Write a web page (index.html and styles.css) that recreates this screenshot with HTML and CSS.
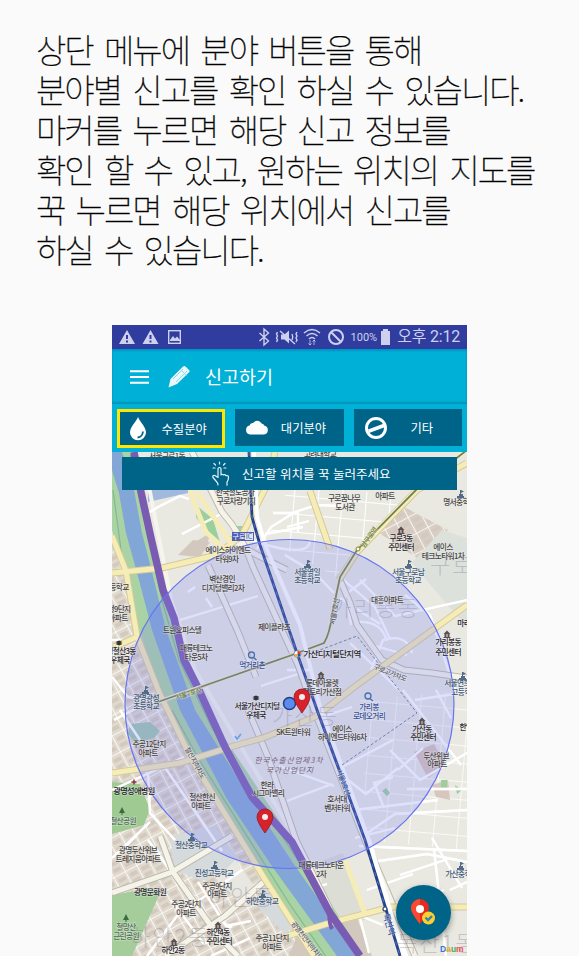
FILE: index.html
```html
<!DOCTYPE html>
<html lang="ko">
<head>
<meta charset="utf-8">
<title>신고하기</title>
<link rel="stylesheet" href="styles.css">
</head>
<body>
<main class="page">
<div class="intro">
<p>상단 메뉴에 분야 버튼을 통해</p>
<p>분야별 신고를 확인 하실 수 있습니다.</p>
<p>마커를 누르면 해당 신고 정보를</p>
<p>확인 할 수 있고, 원하는 위치의 지도를</p>
<p>꾹 누르면 해당 위치에서 신고를</p>
<p>하실 수 있습니다.</p>
</div>
<section class="phone">
<div class="status">
<svg class="status-icons" viewBox="0 0 355 24">
<g fill="#cdd1ee">
<path fill-rule="evenodd" d="M15 5L23 19H7ZM14 10v4h2v-4ZM14 15.500v2h2v-2Z"/>
<path fill-rule="evenodd" d="M38.500 5L46.500 19H30.500ZM37.500 10v4h2v-4ZM37.500 15.500v2h2v-2Z"/>
<path d="M58 15l3-4 2 2.500 2-2 3 3.500v1H58z"/>
<path d="M169 9.500h3.500l4.500-4v13l-4.500-4H169z"/>
<path d="M269 6h2V4h5v2h2v14h-9z"/>
</g>
<g fill="none" stroke="#cdd1ee" stroke-width="1.400">
<rect x="56.700" y="5.700" width="11.600" height="12.600"/>
<path d="M147.500 8l9 8-4.500 4V4l4.500 4-9 8"/>
<path d="M165.500 7l-1 2 1 2-1 2 1 2-1 2M168 6l15 13M180 9q1.500 3 0 6M185 7l-1 2 1 2-1 2 1 2-1 2"/>
<path d="M192 8q8-7 16 0M194.500 11q5.500-5 11 0M197 14q3-3 6 0"/>
<path d="M198 15v5m-1.500-1.500L198 20l1.500-1.500M202 20v-5m-1.500 1.500L202 15l1.500 1.500" stroke-width=".8"/>
<circle cx="224" cy="12" r="7" stroke-width="2"/><path d="M219 7l10 10" stroke-width="2"/>
</g>
</svg>
<span class="battery">100%</span><span class="clock">오후 2:12</span>
</div>
<header class="bar">
<svg class="burger" viewBox="0 0 20 14"><path d="M0 1.300h19M0 7h19M0 12.700h19" stroke="#fff" stroke-width="2"/></svg>
<svg class="pencil" viewBox="0 0 22 22"><path d="M15 0.500q1.500-1 3 .5l3 3q1 1 .3 2L9 18 .5 21.500 2.500 13z" fill="#e9f8fc"/><path d="M5 13l10-10M8 16L19 5M12.500 3.500l6 6" stroke="#8bd9ea" stroke-width="1"/></svg>
<h1>신고하기</h1>
</header>
<nav class="tabs">
<button class="tab active"><svg viewBox="0 0 24 24"><path d="M12 0C10 5 4 10 4 15.500a8 7.700 0 0 0 16 0C20 10 14 5 12 0z" fill="#fff"/><path d="M11.500 20.500q5-.5 5.500-6" fill="none" stroke="#006489" stroke-width="1.800"/></svg><span>수질분야</span></button>
<button class="tab"><svg viewBox="0 0 24 24"><path d="M5 18.500a4.600 4.600 0 0 1-.5-9q1-3 3.500-2.500 5-5 9 .8 1.500.2 2.500 1.900a4.500 4.500 0 0 1-.5 8.800z" fill="#fff"/></svg><span>대기분야</span></button>
<button class="tab"><svg viewBox="0 0 24 24"><circle cx="12" cy="12" r="9.500" fill="none" stroke="#fff" stroke-width="3"/><path d="M4 13.500L20 7.500v4L5 17z" fill="#fff"/></svg><span>기타</span></button>
</nav>
<div class="map">
<svg class="canvas" viewBox="112 452 355 504">
<defs>
<pattern id="blocks" width="13" height="18" patternUnits="userSpaceOnUse" patternTransform="rotate(-28)"><path d="M0 0h13M0 0v18" stroke="#fff" stroke-width="1.600" fill="none"/><path d="M3 4h8v4H3zM3 11h8v4H3z" fill="#d4c9be"/></pattern>
<pattern id="grid" width="24" height="18" patternUnits="userSpaceOnUse" patternTransform="rotate(5)"><path d="M0 0h24M0 0v18" stroke="#fff" stroke-width="2" fill="none"/></pattern>
<g id="school" fill="#526b86"><path d="M-3 2h7v2h-7zM-1 0h4v2h-4zM0-4h1v5H0zM1-4l3 1.500L1-1z"/></g>
<g id="office" fill="#5a5050"><path d="M-3.500 0L0-3.500 3.500 0zM-2.500 0h1.500v3h-1.500zM1 0h1.500v3H1zM-.5 0h1v3h-1zM-3.500 3h7v1h-7z"/></g>
<g id="post" fill="#333"><path d="M-3.500-1L0-2.500 3.500-1 1.500 0 3.500 1 0 2.500-3.500 1-1.500 0z"/></g>
<g id="tree" fill="#3e6b45"><path d="M0-4l3 6h-6zM-.5 1h1v3h-1z"/></g>
<g id="pin"><path d="M0 12Q-8 1-8-4a8 8 0 0 1 16 0Q8 1 0 12z" fill="#d8222b" stroke="#8e1d25" stroke-width=".8"/><circle cy="-4" r="3" fill="#eee"/></g>
</defs>
<rect x="112" y="452" width="355" height="504" fill="#e9e9e2"/>
<!-- city blocks -->
<path d="M112 540L127 590 160 695 193 765 236 836 314 956H112z" fill="#e0d9ce"/>
<path d="M112 540L127 590 160 695 193 765 236 836 314 956H112z" fill="url(#blocks)"/>
<path d="M400 505L448 530 420 560 375 530z" fill="#d9cec3"/>
<path d="M400 505L448 530 420 560 375 530z" fill="url(#blocks)"/>
<path d="M287 490h70l50 10-50 50-15 30-75-40z" fill="url(#grid)"/>
<path d="M360 700L467 690V850l-100-10z" fill="url(#grid)" opacity=".75"/>
<path d="M442 530l25 8v90l-55-65z" fill="#dce1dc"/>
<path d="M170 836l45-10 25 35-38 20-28-12z" fill="#d5dadd"/>
<path d="M235 860l22 30-15 15-25-26z" fill="#e8e7e2"/>
<path d="M264 884l28 38-5 14-30-30z" fill="#d5dadd"/>
<path d="M318 862l25-9 24 66-35 12z" fill="#dcded5"/>
<path d="M178 555l15-15 17 2-10 15zM190 545l20-12-4 18zM333 925l22-12 17 43h-17zM297 935l14-3 18 24h-40z" fill="#d3c8be"/>
<path d="M414 752l20-8 12 22-18 12zM432 785l16-5 2 20-14-3z" fill="#d8c5bc"/>
<!-- parks -->
<path d="M112 782l28 2 10 25-6 16-32 9z" fill="#9fcb93"/>
<path d="M112 895l40-7 8 5-28 63h-20z" fill="#a5cd9b"/>
<path d="M130 724l20-2 10 9-6 7-18 5-8-9z" fill="#9fc9ae"/>
<path d="M196 505l17 14 9 30-14-14-12-18zM230 526h18l-4 9zM382 791l4-3 4 5-3 3zM441 780h6v8h-6zM455 785l7 5-5 4z" fill="#9bcf9d"/>
<path d="M148 480l40 5v8l-40 9z" fill="#a1b9dc"/>
<!-- river -->
<path d="M112 452h22l27 130 24 83 23 48 86 130 69 113h-47L236 836 193 765 160 695 127 590 112 530z" fill="#a9d3a4"/>
<path d="M113 490l12 90 19 70 25 63M130 455l17 75 15 70 17 60 33 68 85 131 65 109M172 710l26 48 91 145 42 61" fill="none" stroke="#83b98d" stroke-width="1.200"/>
<path d="M112 452h10l12 38 8 43 12 47 12 50 29 80 55 88 45 68 64 90h-22l-63-87-47-70-47-89-28-80-13-50-13-47-7-40-7-23z" fill="#82a6d5"/>
<path d="M143 456l28 144 24 70 94 157" fill="none" stroke="#f5f5ed" stroke-width="4"/>
<!-- minor streets -->
<g fill="none" stroke="#b9b9b4" stroke-width="3.400" opacity=".65"><use href="#streets"/></g>
<g id="streets" fill="none" stroke="#fff" stroke-width="2.300">
<path d="M150 512l8-5 22-11 9 3M182 534l43-22M180 620l78-24M188 592l7-5M212 607l-6-9M257 549l14-22 24-15 22-7 22 1M273 513h25v20M287 527l22-6M265 534l38-7M250 540q60 20 60 0"/>
<path d="M285 555l30 18 19 20M340 577l35 30 15 32M351 625l-5-31 20-15M340 598l40 26M387 641q-6-20-28-19M412 653q-5-20-29-13l-12 30M372 645l35 10M360 580l35 36 72-16M350 643l50 48M405 595l25 20 25 75"/>
<path d="M287 670h25M261 686l37-12M267 735l85-28M279 766l55 20M287 801l45-17M344 766l49-26M348 780l18 14 32-26M346 811l92-11M384 808l-10-25 19-6M360 838l35-24 72-4M407 789h60M398 770l25-22M403 690l58 75M415 700l52-8M436 690l15 28M390 750l30 30 47-27"/>
<path d="M355 838l40-10M372 862l55-8 40 8M367 890l46-16M359 846l108 5M432 838l30 50M391 905l53-15M407 956l-15-40M434 850l12 106M400 875l48-16M450 890l17-8M383 925l-25-10M369 953l-9-35M290 935l21-5M317 887l10-3"/>
<path d="M112 640h23M112 677l16 20 25 5M114 720l25-13M120 710l20 30M112 790l72-33M148 773l2 40 25 27M150 822l-38 36M122 850l15-15M148 840l33 45M164 766l58 85M174 870l22 30M171 900l33 44 28-18M198 882l28 44 25-5M211 956l39-18M147 956l30-40 65-46"/>
</g>
<!-- arterials -->
<g fill="none" stroke="#bbb9b0" stroke-width="7">
<path d="M192 452l30 60q20 22 31 55l45 98 15 42 52 133 50 116M208 565l30 67 18 45M248 710l20 47 28 83 34 69M340 580l10 23 7 22 25 35 22 10 28 3 35 5M287 570l-30-15-28-16"/>
<path d="M160 836l13 36 45 64 20 20M112 893l60-21 60-36M165 956l60-40 42-37"/>
</g>
<g fill="none" stroke="#f6f4e9" stroke-width="5">
<path d="M192 452l30 60q20 22 31 55l45 98 15 42 52 133 50 116M208 565l30 67 18 45M248 710l20 47 28 83 34 69M340 580l10 23 7 22 25 35 22 10 28 3 35 5M287 570l-30-15-28-16"/>
<path d="M160 836l13 36 45 64 20 20M112 893l60-21 60-36M165 956l60-40 42-37"/>
</g>
<g fill="none" stroke="#d5ca9a" stroke-width="7">
<path d="M112 536l14 35 11 65 22 56 33 68 74 121 48 75M112 573l50-5 55-13 25-20 25-50 8-33M114 647l25-11M112 773l68-10 57-18 26-7M310 491l20 58M467 605l-110 80-42 32-52 21M287 936l46-14 58-15h76M467 463l-50 27-60 62-18 28"/>
</g>
<g fill="none" stroke="#f6ecb6" stroke-width="5">
<path d="M112 536l14 35 11 65 22 56 33 68 74 121 48 75M112 573l50-5 55-13 25-20 25-50 8-33M114 647l25-11M112 773l68-10 57-18 26-7M310 491l20 58M467 605l-110 80-42 32-52 21M287 936l46-14 58-15h76M467 463l-50 27-60 62-18 28M345 860l20 54"/>
<path d="M190 490q10 28 16 42l22 20M197 492l25 38 10 15"/>
</g>
<path d="M134 452l7 40 10 46 12 52 11 28 10 42 15 30 26 57 27 50 40 45 38 71 30 43" fill="none" stroke="#7a5bb2" stroke-width="7.500" stroke-linejoin="round"/>
<path d="M330 909q-2 12 2 20" fill="none" stroke="#7a5bb2" stroke-width="4"/>
<!-- rail lines -->
<path d="M155 703l137-48 32-12q6-10 8-28l8-38 17-27 60-61 50-39" fill="none" stroke="#f0edcf" stroke-width="4"/>
<path d="M155 703l137-48 32-12q6-10 8-28l8-38 17-27 60-61 50-39" fill="none" stroke="#768344" stroke-width="1.800"/>
<path d="M254 452l3 65 9 30 34 78 20 82 50 136 34 113" fill="none" stroke="#fff" stroke-width="4"/>
<path d="M249 452l3 65 8 28 37 108 20 57 48 130 35 116" fill="none" stroke="#24418e" stroke-width="2.800"/>
<path d="M249 452l3 65 8 28 37 108 20 57 48 130 35 116" fill="none" stroke="#8093c2" stroke-width=".6" stroke-dasharray="4 5"/>
<path d="M342 765l75-52-35-45-25-32-45 17" fill="none" stroke="#62778d" stroke-width=".9" stroke-dasharray="3 2"/>
<circle cx="385" cy="909" r="2" fill="#fff" stroke="#24418e" stroke-width="1.200"/><circle cx="358" cy="549" r="2" fill="#fff" stroke="#768344"/>
<!-- district names -->
<g class="district"><text x="331" y="616">가리봉동</text><text x="272" y="724">가산동</text><text x="208" y="905">하안동</text><text x="130" y="945">하안2동</text><text x="397" y="951">독산1동</text><text x="430" y="573">구로</text></g>
<!-- search radius -->
<circle cx="289.500" cy="704" r="164.500" fill="#7d84f5" fill-opacity=".25" stroke="#6673f2" stroke-width="1.200"/>
<g class="label">
<text x="167" y="459">서울구로1동</text><text x="320" y="457">고려대학교</text><text x="235" y="495">한국철도공사</text><text x="236" y="504">구로차량기지</text>
<text x="228" y="553">에이스하이엔드</text><text x="227" y="562">타워9차</text><text x="222" y="582">벽산경인</text><text x="223" y="591">디지털밸리2차</text>
<text x="344" y="501">구로꿈나무</text><text x="345" y="510">도서관</text><text x="385" y="499">아파트</text><text x="456" y="505">명서중학</text>
<text x="443" y="550">에이스</text><text x="443" y="559">테크노타워1차</text>
<text x="182" y="633">트윈오피스텔</text><text x="196" y="651">대륭테크노</text><text x="196" y="660">타운5차</text><text x="274" y="630">제이플라츠</text><text x="387" y="603">대흥아파트</text>
<text x="119" y="612">철9단지</text><text x="118" y="621">아파트</text><text x="119" y="590">등학교</text>
<text x="322" y="686">롯데아울렛</text><text x="322" y="695">팩토리가산점</text><text x="293" y="735">SK트윈타워</text><text x="342" y="732">에이스</text><text x="342" y="740">하이엔드타워6차</text>
<text x="436" y="759">두산위브</text><text x="437" y="767">아파트</text><text x="337" y="802">호서대</text><text x="337" y="811">벤처타워</text><text x="267" y="788">한라</text><text x="268" y="796">시그마밸리</text>
<text x="149" y="747">주공12단지</text><text x="148" y="756">아파트</text><text x="202" y="800">철산한신</text><text x="201" y="809">아파트</text><text x="138" y="853">광명두산위브</text><text x="138" y="862">트레지움아파트</text><text x="217" y="889">주공9단지</text><text x="217" y="897">아파트</text><text x="186" y="907">주공2단지</text><text x="186" y="916">아파트</text><text x="272" y="941">주공11단지</text><text x="272" y="950">아파트</text><text x="321" y="868">대륭테크노타운</text><text x="321" y="877">2차</text>
</g>
<g class="label strong">
<text x="401" y="541">구로3동</text><text x="401" y="550">주민센터</text><text x="332" y="657" class="station">가산디지털단지역</text><text x="448" y="645">가리봉동</text><text x="448" y="655">주민센터</text><text x="467" y="626">마리오</text>
<text x="257" y="709">서울가산디지털</text><text x="256" y="718">우체국</text><text x="121" y="654">명철산3동</text><text x="120" y="663">우체국</text><text x="422" y="732">가산동</text><text x="423" y="740">주민센터</text><text x="466" y="730">한양</text>
<text x="134" y="794" class="wide">광명성애병원</text><text x="150" y="895">광명문화원</text><text x="218" y="935">하안4동</text><text x="219" y="944">주민센터</text><text x="173" y="953">하안2동</text>
</g>
<g class="label blue"><text x="307" y="575">서울영일</text><text x="307" y="583">초등학교</text><text x="408" y="575">서울구로남</text><text x="408" y="583">초등학교</text><text x="146" y="701">광명광성</text><text x="146" y="709">초등학교</text><text x="457" y="686">서울연희</text><text x="461" y="695">고등학</text><text x="191" y="848">철산중학교</text><text x="214" y="876">진성고등학교</text><text x="262" y="904">하안중학교</text><text x="458" y="877">가산중학</text><text x="252" y="668" class="place">먹거리촌</text><text x="369" y="710" class="place">가리봉</text><text x="369" y="719" class="place">로데오거리</text></g>
<g class="label green"><text x="123" y="824">철산공원</text><text x="126" y="930">철망산</text><text x="126" y="939">근린공원</text></g>
<g class="label industry"><text x="289" y="763">한국수출산업제3차</text><text x="290" y="773">국가산업단지</text></g>
<g class="label route"><text transform="translate(189 696) rotate(-17)" fill="#707d3e">서울7호선</text><text transform="translate(337 612) rotate(-80)">서울7호선</text><text transform="translate(371 539) rotate(-55)" fill="#70812e">남구로역</text><text transform="translate(193 764) rotate(61)">철산지하차도</text><text transform="translate(389 675) rotate(22)">구로고가차도</text><text transform="translate(341 783) rotate(70)" fill="#34549e">서울1호선</text><text transform="translate(386 925) rotate(74)" fill="#34549e" class="stop">독산역</text><text transform="translate(305 942) rotate(52)">광명천안지하차도</text></g>
<use href="#school" x="307" y="564"/><use href="#school" x="408" y="564"/><use href="#school" x="145" y="690"/><use href="#school" x="460" y="494"/><use href="#school" x="462" y="676"/><use href="#school" x="191" y="837"/><use href="#school" x="214" y="865"/><use href="#school" x="262" y="894"/><use href="#school" x="460" y="866"/>
<use href="#office" x="401" y="530"/><use href="#office" x="447" y="634"/><use href="#office" x="321" y="675"/><use href="#office" x="422" y="721"/><use href="#office" x="218" y="925"/><use href="#office" x="174" y="942"/>
<use href="#post" x="256" y="698"/><use href="#post" x="119" y="643"/><use href="#tree" x="122" y="811"/><use href="#tree" x="126" y="918"/>
<path d="M131.500 782h5M134 779.500v5" stroke="#8d3344" stroke-width="1.500"/>
<g fill="none" stroke="#466fac" stroke-width="1.300"><circle cx="251.500" cy="655" r="3"/><path d="M253.500 657.500l3 2.500"/><circle cx="368" cy="696" r="3"/><path d="M370 698.500l3 2.500"/></g>
<path d="M235 736l2 3 4-5" fill="none" stroke="#6ba3e8" stroke-width="1.800"/>
<rect x="232" y="532" width="22" height="9" fill="#505fae"/><rect x="245" y="533" width="8" height="7" fill="#dfe5f2"/><text class="ic" x="239" y="539">구로</text><text class="ic inv" x="249" y="539">IC</text>
<circle cx="297.500" cy="654" r="3.500" fill="#fff" stroke="#345" stroke-width=".5"/><path d="M297.500 654v-3a3 3 0 0 1 3 3z" fill="#e73032"/><path d="M297.500 654h3a3 3 0 0 1-3 3z" fill="#2553bd"/><path d="M297.500 654v3a3 3 0 0 1-3-3z" fill="#eab422"/>
<circle cx="289.500" cy="703.500" r="6" fill="#5a8cee" stroke="#233d82" stroke-width="1.500"/>
<use href="#pin" x="302" y="701"/><use href="#pin" x="265" y="821"/>
<text class="daum" x="440" y="952"><tspan fill="#3978d5">D</tspan><tspan fill="#e9a62b">a</tspan><tspan fill="#4ba956">u</tspan><tspan fill="#ee4e5e">m</tspan></text>
</svg>
<div class="hint"><svg viewBox="0 0 20 26"><g fill="none" stroke="#e4f3f7" stroke-width="1.200" stroke-linecap="round" stroke-linejoin="round"><path d="M7 24q0-2-2-4l-3-3.500q-1-2.500 2-2l3 2V7.500q1.500-2 3 0V14q1-1.500 2.500 0 1.500-1 2.500.7 2.500-.7 2.500 1.500 0 3-1.500 5v3"/><path d="M8.500 1v2M3 2.500L4.500 4M14 2.500L12.500 4M2 7h2M13 7h2"/></g></svg><span>신고할 위치를 꾹 눌러주세요</span></div>
<button class="fab" aria-label="신고"><svg viewBox="0 0 55 55"><path d="M24 39Q15 28 15 23a9 9 0 0 1 18 0q0 5-9 16z" fill="#e42b1d"/><path d="M24 39Q15 28 15 23a9 9 0 0 1 9-9z" fill="#fa4930"/><circle cx="24" cy="24" r="4" fill="#fff"/><circle cx="32.500" cy="33" r="6.500" fill="#fbd02c"/><path d="M29.500 32.500l2.500 2.500 4-4" fill="none" stroke="#3581bd" stroke-width="2.300"/></svg></button>
</div>
</section>
</main>
</body>
</html>
```
FILE: styles.css
```css
* { box-sizing: border-box; }
body { margin: 0; background: #fafafa; font-family: "Noto Sans CJK KR", sans-serif; }
.page { width: 579px; height: 956px; overflow: hidden; }
.intro { height: 325px; padding: 29px 0 0 36px; }
.intro p { margin: 0; font-size: 33px; font-weight: 100; line-height: 40px; letter-spacing: -2px; word-spacing: 4px; white-space: nowrap; color: #000; -webkit-text-stroke: .35px #000; }
.phone { width: 355px; height: 631px; margin-left: 112px; }
.status { display: flex; height: 24px; align-items: center; justify-content: flex-end; position: relative; background: #303d9e; color: #cdd1ee; padding-right: 7px; }
.status-icons { position: absolute; inset: 0; width: 355px; height: 24px; }
.battery { font: 11px Roboto, sans-serif; margin-right: 20px; }
.clock { font: 16px/24px Roboto, "Noto Sans CJK KR", sans-serif; letter-spacing: -.2px; white-space: nowrap; }
.bar { display: flex; align-items: center; height: 55px; padding-left: 18px; background: #00b0d7; box-shadow: inset 0 2px 2px #0094c5, inset 0 -2px 2px #0096b8; }
.burger { width: 20px; height: 14px; }
.pencil { width: 22px; height: 22px; margin-left: 18px; }
.bar h1 { margin: 0 0 1px 15px; font-size: 18.5px; line-height: 28px; font-weight: 400; color: #fff; }
.tabs { display: flex; gap: 10px; height: 48px; padding: 5px 5px 0; align-items: flex-start; background: #00b0d7; }
.tab { display: flex; align-items: center; width: 108.5px; height: 37px; padding: 0 6px 0 10px; border: 0; background: #006489; color: #fff; font: 12.3px "Noto Sans CJK KR", sans-serif; white-space: nowrap; }
.tab.active { height: 39px; padding: 0 4px 0 6px; border: 3px solid #ffe500; }
.tab svg { width: 24px; height: 24px; flex: none; }
.tab span { flex: 1; text-align: center; }
.map { position: relative; height: 504px; overflow: hidden; }
.canvas { display: block; width: 355px; height: 504px; }
.hint { position: absolute; left: 10px; top: 5px; width: 335px; height: 33px; background: #006489; color: #fff; display: flex; align-items: center; padding-left: 89px; font-size: 12.5px; white-space: nowrap; }
.hint svg { width: 20px; height: 26px; margin-right: 11px; }
.fab { position: absolute; right: 16px; bottom: 16px; width: 55px; height: 55px; padding: 0; border: 0; border-radius: 50%; background: #006489; box-shadow: 0 3px 6px #0006; }
.fab svg { display: block; width: 55px; height: 55px; }
.label { font-size: 7.7px; font-weight: 500; letter-spacing: -.65px; text-anchor: middle; fill: #454343; stroke: #f1f0ee; stroke-width: 1.2px; stroke-opacity: .5; paint-order: stroke; }
.strong { fill: #25242c; }
.station { font-size: 8.5px; }
.wide { font-size: 8.2px; }
.blue { fill: #3c5878; }
.place { fill: #354f9a; }
.green { fill: #4c6c50; }
.industry { fill: #746080; letter-spacing: .9px; font-style: italic; font-weight: 400; stroke: none; }
.route { font-size: 7px; fill: #5c6272; }
.stop { font-size: 8.5px; }
.district { font-size: 22px; font-weight: 300; letter-spacing: 2px; fill: #707080; opacity: .3; }
.ic { font-size: 7px; fill: #fff; text-anchor: middle; }
.inv { fill: #405ba0; }
.daum { font: bold 8.5px "Liberation Sans", sans-serif; }
```
